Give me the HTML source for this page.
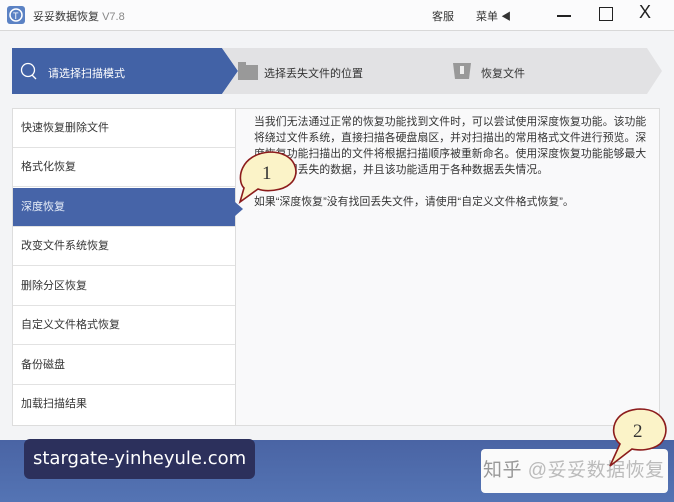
<!DOCTYPE html>
<html><head><meta charset="utf-8"><style>
*{margin:0;padding:0;box-sizing:border-box}
body{width:674px;height:502px;overflow:hidden;background:#f3f4f6;font-family:"Liberation Sans","Noto Sans CJK SC",sans-serif;position:relative;color:#333}
.a{position:absolute}
.title{left:0;top:0;width:674px;height:31px;background:#fbfbfc;border-bottom:1px solid #d8d8d8}
.list{left:12px;top:108px;width:224px;height:318px;background:#fff;border:1px solid #ddd}
.item{position:absolute;left:0;width:222px;height:39px;border-bottom:1px solid #e2e2e2;font-size:11px;line-height:39px;padding-left:8px;color:#333}
.panel{left:236px;top:108px;width:424px;height:318px;background:#f9f9fa;border:1px solid #ddd;border-left:none}
.txt{left:254px;top:114px;width:394px;font-size:10.8px;line-height:16px;color:#333;letter-spacing:0.1px}
</style></head><body>
<div class="a title"></div>
<svg class="a" style="left:6px;top:5px" width="20" height="20"><rect x="1" y="1" width="18" height="18" rx="3" fill="#5b82c4"/><circle cx="10" cy="10" r="6" fill="none" stroke="#fff" stroke-width="1.5"/><text x="7" y="14" font-size="9" fill="#fff" font-family="Liberation Sans">T</text></svg>
<div class="a" style="left:33px;top:8px;font-size:11px;color:#333">妥妥数据恢复 <span style="color:#888">V7.8</span></div>
<div class="a" style="left:432px;top:8px;font-size:11px">客服</div>
<div class="a" style="left:476px;top:8px;font-size:11px">菜单 <span style="font-size:10px">◀</span></div>
<div class="a" style="left:557px;top:15px;width:14px;height:2px;background:#222"></div>
<div class="a" style="left:599px;top:7px;width:14px;height:14px;border:1.5px solid #222"></div>
<div class="a" style="left:639px;top:2px;font-size:18px;color:#222">X</div>
<svg class="a" style="left:12px;top:48px" width="650" height="46">
<polygon points="0,0 210,0 226,23 210,46 0,46" fill="#4262a6"/>
<polygon points="210,0 635,0 650,23 635,46 210,46 226,23" fill="#e2e2e4"/>
<circle cx="16" cy="22" r="6.5" fill="none" stroke="#fff" stroke-width="1.3"/><line x1="20" y1="27" x2="24" y2="31" stroke="#fff" stroke-width="1.3"/>
<rect x="226" y="17" width="20" height="15" fill="#999"/><rect x="226" y="14" width="8" height="4" fill="#999"/>
<path d="M441 15 h18 l-2 16 h-14 z" fill="#999"/><rect x="448" y="18" width="4" height="8" fill="#eee"/>
</svg>
<div class="a" style="left:48px;top:65px;font-size:11px;color:#fff">请选择扫描模式</div>
<div class="a" style="left:264px;top:65px;font-size:11px;color:#333">选择丢失文件的位置</div>
<div class="a" style="left:481px;top:65px;font-size:11px;color:#333">恢复文件</div>
<div class="a list">
<div class="item" style="top:0">快速恢复删除文件</div>
<div class="item" style="top:39px">格式化恢复</div>
<div class="item" style="top:79px;background:#4664a8;color:#e8eef8">深度恢复</div>
<div class="item" style="top:118px">改变文件系统恢复</div>
<div class="item" style="top:158px">删除分区恢复</div>
<div class="item" style="top:197px">自定义文件格式恢复</div>
<div class="item" style="top:237px">备份磁盘</div>
<div class="item" style="top:276px;border:none">加载扫描结果</div>
</div>
<div class="a panel"></div>
<svg class="a" style="left:235px;top:202px" width="10" height="14"><polygon points="0,0 8,7 0,14" fill="#4664a8"/></svg>
<div class="a txt">当我们无法通过正常的恢复功能找到文件时，可以尝试使用深度恢复功能。该功能将绕过文件系统，直接扫描各硬盘扇区，并对扫描出的常用格式文件进行预览。深度恢复功能扫描出的文件将根据扫描顺序被重新命名。使用深度恢复功能能够最大限度找回丢失的数据，并且该功能适用于各种数据丢失情况。<br><br>如果“深度恢复”没有找回丢失文件，请使用“自定义文件格式恢复”。</div>
<div class="a" style="left:0;top:440px;width:674px;height:62px;background:linear-gradient(#4a64a4,#5474b4)"></div>
<div class="a" style="left:24px;top:439px;width:231px;height:40px;background:#2c305c;border-radius:6px;color:#fff;font-family:'DejaVu Sans',sans-serif;font-size:18px;line-height:40px;padding-left:9px">stargate-yinheyule.com</div>
<div class="a" style="left:481px;top:449px;width:187px;height:44px;background:#fafafa;border-radius:4px"></div>
<div class="a" style="left:483px;top:455px;font-size:19px;color:#bbb;letter-spacing:0.5px"><span style="color:#999">知乎</span> @妥妥数据恢复</div>
<svg class="a" style="left:232px;top:146px" width="72" height="64"><path d="M12 42 C4 34 8 8 38 6 C64 6 70 28 58 38 C50 45 34 46 26 43 L8 56 Z" fill="#fbf3c8" stroke="#8c1c1c" stroke-width="1.6"/><text x="30" y="33" font-size="19" font-family="Liberation Serif" fill="#333">1</text></svg>
<svg class="a" style="left:600px;top:404px" width="74" height="66"><path d="M20 40 C8 30 12 6 40 5 C66 5 72 28 60 40 C52 46 40 47 32 45 L10 62 Z" fill="#fbf3c8" stroke="#8c1c1c" stroke-width="1.6"/><text x="33" y="33" font-size="19" font-family="Liberation Serif" fill="#333">2</text></svg>
</body></html>
